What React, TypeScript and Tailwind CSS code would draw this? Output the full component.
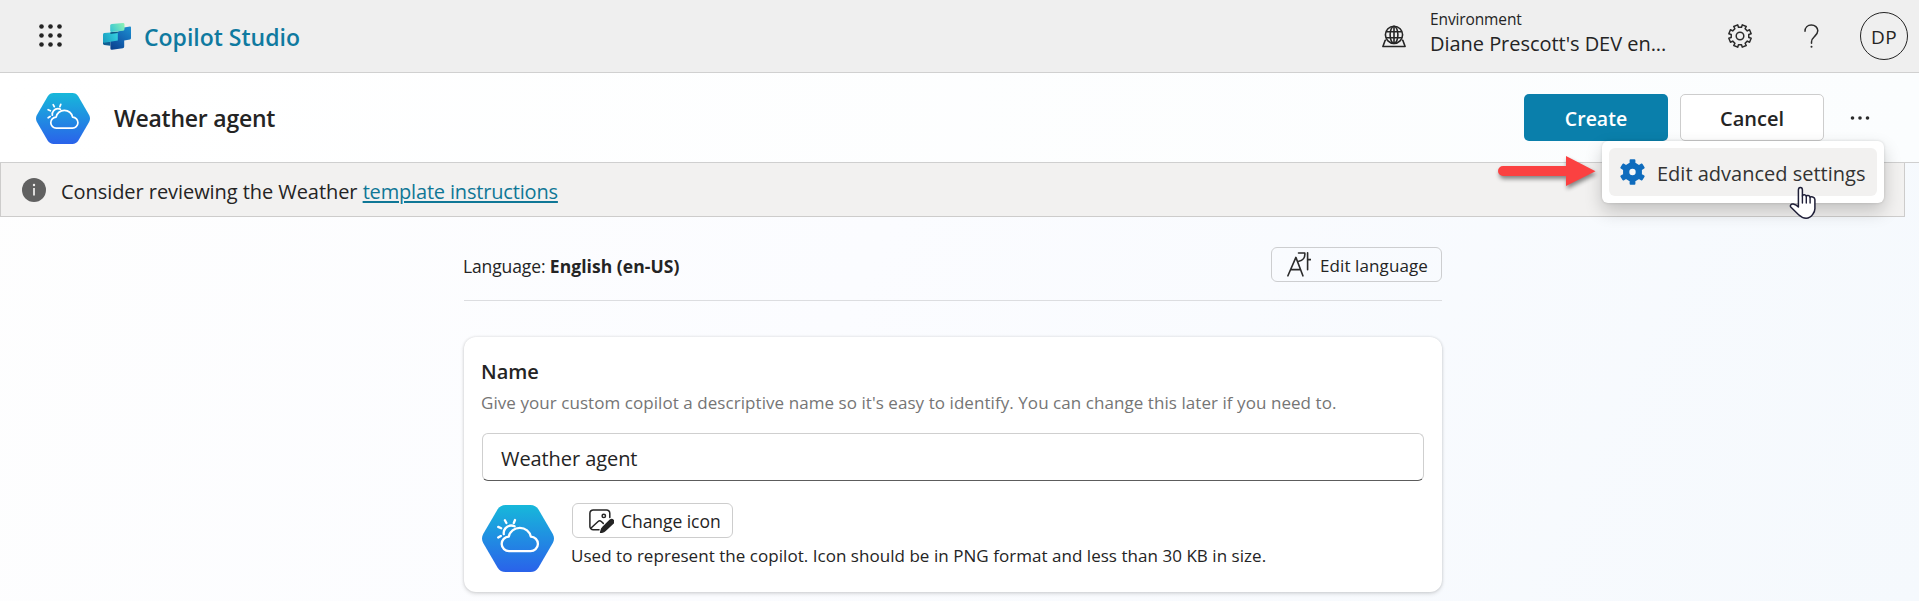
function HexWeather({ className, id }: { className: string; id: string }) {
  return (
    <svg className={className} viewBox="0 0 72 67" fill="none" preserveAspectRatio="none">
      <defs>
        <linearGradient id={id} x1="36" y1="0" x2="36" y2="67" gradientUnits="userSpaceOnUse">
          <stop stopColor="#17b8da" />
          <stop offset="1" stopColor="#2a62ea" />
        </linearGradient>
      </defs>
      <path
        d="M23.5 0h25c3.400 0 6.200 1.500 8 4.500l14.300 24.400c1.600 2.900 1.600 6.300 0 9.200L56.500 62.500c-1.800 3-4.600 4.500-8 4.500h-25c-3.400 0-6.200-1.500-8-4.500L1.200 38.100c-1.600-2.900-1.600-6.300 0-9.200L15.500 4.500C17.300 1.500 20.100 0 23.500 0z"
        fill={`url(#${id})`}
      />
      <g stroke="#fff" strokeWidth="2.300" strokeLinecap="round" strokeLinejoin="round">
        <path d="M27.200 46.200a7.300 7.300 0 0 1-.4-14.600c.9-5.100 5.500-8.800 11-8.800s10.100 3.700 11 8.800a7.300 7.300 0 0 1-.4 14.600z" />
        <path d="M21.800 29.200c-.8-4.600 3-8.700 7.400-8.700 1.300 0 2.400.3 3.400.8" />
        <path d="M24.400 18l-1.500-2.700M31.800 18l1.200-3M19.200 23.300l-3-1.400M18.800 30.900l-2.600 1.600" />
      </g>
    </svg>
  );
}

function CopilotLogo() {
  return (
    <svg className="h-[27px] w-7" viewBox="0 0 28 27">
      <defs>
        <linearGradient id="lgTop" x1="7" y1="8" x2="21" y2="0" gradientUnits="userSpaceOnUse">
          <stop stopColor="#35c3d4" />
          <stop offset="1" stopColor="#8df3b4" />
        </linearGradient>
        <linearGradient id="lgLeft" x1="0" y1="17" x2="14" y2="10" gradientUnits="userSpaceOnUse">
          <stop stopColor="#1a9fc0" />
          <stop offset="1" stopColor="#35cfe0" />
        </linearGradient>
        <linearGradient id="lgRight" x1="26" y1="4" x2="10" y2="26" gradientUnits="userSpaceOnUse">
          <stop stopColor="#1b8ccd" />
          <stop offset="0.5" stopColor="#1467b5" />
          <stop offset="1" stopColor="#0b438f" />
        </linearGradient>
      </defs>
      <path d="M21 4.500 27 3.600q1-.1 1 .9V15q0 1.200-1 1.400l-5.800 1v6.200q0 1.500-1.400 1.700L9 26.700q-1.600.2-1.600-1.300V17l7-8z" fill="url(#lgRight)" />
      <path d="M0 18.500l7.400 0v4.200L1.200 22Q0 21.800 0 20.600z" fill="#0f5f94" />
      <path d="M7.600 9.500 14.800 9v8.500L1.300 19.800Q0 20 0 18.800v-7.300Q0 10.300 1.200 10.100z" fill="url(#lgLeft)" />
      <path d="M7.400 9.300 14.800 8.500v1.400l-7.400 1z" fill="#0d5a86" />
      <path d="M8.800.9 20 0q1.500 0 1.500 1.400V6q0 1.500-1.400 1.700L8.700 9q-1.500.1-1.500-1.300V2.300Q7.200 1 8.800.9z" fill="url(#lgTop)" />
    </svg>
  );
}

function gearPath(cx: number, cy: number, teeth: number, ro: number, ri: number, wo: number, wi: number) {
  const step = (Math.PI * 2) / teeth;
  const pt = (a: number, r: number) =>
    `${(cx + r * Math.sin(a)).toFixed(2)} ${(cy - r * Math.cos(a)).toFixed(2)}`;
  let d = "";
  for (let i = 0; i < teeth; i++) {
    const a = i * step;
    d += `${i ? "L" : "M"}${pt(a - step * wi, ri)}L${pt(a - step * wo, ro)}L${pt(a + step * wo, ro)}L${pt(a + step * wi, ri)}`;
  }
  return d + "Z";
}

function SettingsOutline() {
  return (
    <svg className="size-6" viewBox="0 0 24 24" fill="none" stroke="#2b2b2b" strokeWidth="1.500" strokeLinejoin="round">
      <g transform="rotate(22.500 12 12)">
        <path d={gearPath(12, 12, 8, 11.4, 8.9, 0.24, 0.28)} />
      </g>
      <circle cx="12" cy="12" r="3.800" />
    </svg>
  );
}

function GlobeStand() {
  return (
    <svg className="h-[23px] w-6" viewBox="0 0 24 23" fill="none" stroke="#262626" strokeWidth="1.600">
      <circle cx="12" cy="9.800" r="8.600" />
      <ellipse cx="12" cy="9.800" rx="3.900" ry="8.600" />
      <path d="M4 6.800h16M4 12.800h16M12 1.200v17" />
      <path d="M4.200 15.200H3.200L.9 21.500h22.200l-2.300-6.300h-1" strokeLinejoin="round" />
    </svg>
  );
}

function HelpMark() {
  return (
    <svg className="h-6 w-[15px]" viewBox="0 0 15 24" fill="none">
      <path
        d="M1 7.200C1 3.500 3.700.9 7.300.9s6.500 2.500 6.500 5.900c0 2.700-1.700 4.200-3.300 5.700-1.700 1.600-3 2.900-3 5.400v1.300"
        stroke="#2b2b2b"
        strokeWidth="1.500"
        strokeLinecap="round"
      />
      <circle cx="7.500" cy="22.800" r="1" fill="#2b2b2b" />
    </svg>
  );
}

function LanguageIcon() {
  return (
    <svg className="h-[25px] w-6" viewBox="0 0 24 25" fill="none" stroke="#2b2b2b" strokeWidth="1.600" strokeLinecap="round" strokeLinejoin="round">
      <path d="M.9 23.800 8.900 5.400l7 18.400M3.900 17.600h9.600" />
      <path d="M11.500 1h6.300c.4 4-1.700 7.300-6 8.300M20.600.8v17M20.600 7.600h3" />
    </svg>
  );
}

function ImageEdit() {
  return (
    <svg className="h-6 w-[25px]" viewBox="0 0 25 24" fill="none" stroke="#242424" strokeWidth="1.500" strokeLinecap="round">
      <path d="M10 20.800H4.200A3.300 3.300 0 0 1 .9 17.500V4.200A3.300 3.300 0 0 1 4.200.9h13.300a3.300 3.300 0 0 1 3.300 3.300v4.300" />
      <path d="M1.800 19.300l7.300-6.800c1-.9 2.200-.9 3.200 0l2 1.900" />
      <circle cx="14.800" cy="6.900" r="1.700" />
      <path d="M21.200 11a2.200 2.200 0 0 1 3.100 3.100l-8 7.400c-1.300 1.200-2.600 1.700-4.700 2.100.3-2.100.6-3.700 2-5z" fill="#242424" strokeWidth="1.400" strokeLinejoin="round" />
    </svg>
  );
}

const dots = [2.5, 11.5, 20.5];

export default function App() {
  return (
    <div className="relative h-[601px] w-full overflow-hidden bg-[linear-gradient(115deg,#fefefe_0%,#fbfcff_45%,#f5f9fd_100%)] font-['Open_Sans',sans-serif] text-[#242424]">
      <header className="flex h-[73px] items-center border-b border-[#d0d0d0] bg-[#efefef] pl-[38.500px] pr-[11px]">
        <svg className="-mt-px size-[23px]" viewBox="0 0 23 23" fill="#242424">
          {dots.map((y) => dots.map((x) => <circle key={`${x}-${y}`} cx={x} cy={y} r="2.300" />))}
        </svg>
        <div className="ml-[41.500px]">
          <CopilotLogo />
        </div>
        <span className="ml-[13px] pt-0.5 text-[23px] leading-8 font-semibold text-[#0f7aa0]">Copilot Studio</span>
        <div className="ml-auto flex items-center">
          <GlobeStand />
          <div className="-mt-2.5 ml-6 w-[298px]">
            <div className="text-[15.500px] leading-6 tracking-[-0.120px]">Environment</div>
            <div className="pt-px text-[20px] leading-6 tracking-[-0.040px]">Diane Prescott's DEV en...</div>
          </div>
          <SettingsOutline />
          <div className="ml-[52px]">
            <HelpMark />
          </div>
          <div className="ml-[41px] flex size-12 items-center justify-center rounded-full border border-[#242424] pt-px text-[19px] leading-6 tracking-[0.300px]">
            DP
          </div>
        </div>
      </header>

      <div className="flex h-[90px] items-center border-b border-[#cfcfcf] bg-[linear-gradient(90deg,#ffffff,#fbfdfe)] pr-[46px] pl-9">
        <HexWeather className="mt-px h-[51px] w-[54px]" id="hexSmall" />
        <h1 className="ml-6 pt-px text-[23px] leading-8 font-semibold tracking-[-0.240px]">Weather agent</h1>
        <button className="ml-auto flex h-[47px] w-36 items-center justify-center rounded-[5px] bg-[#0a7fab] pt-[3px] text-[19.500px] leading-6 font-semibold text-white">
          Create
        </button>
        <button className="ml-3 flex h-[47px] w-36 items-center justify-center rounded-[5px] border border-[#cdcdcd] bg-white pt-[3px] text-[20px] leading-6 font-semibold">
          Cancel
        </button>
        <svg className="ml-[25px] h-5 w-6" viewBox="0 0 24 20" fill="#2b2b2b">
          <circle cx="3.500" cy="10" r="1.800" />
          <circle cx="11" cy="10" r="1.800" />
          <circle cx="18.500" cy="10" r="1.800" />
        </svg>
      </div>

      <div className="mr-3.5 flex h-[54px] items-center border-r border-b border-l border-[#cdcccb] bg-[#f2f1f0] pl-[21px]">
        <svg className="size-6" viewBox="0 0 24 24">
          <circle cx="12" cy="12" r="12" fill="#616161" />
          <circle cx="12" cy="7" r="1.200" fill="#f2f1f0" />
          <path d="M12 10v7.500" stroke="#f2f1f0" strokeWidth="1.700" />
        </svg>
        <p className="mt-1 ml-[15px] text-[20px] leading-7 tracking-[-0.060px]">
          Consider reviewing the Weather{" "}
          <a className="tracking-[-0.170px] text-[#0f7796] underline decoration-[1.500px] underline-offset-2">template instructions</a>
        </p>
      </div>

      <main className="ml-[464px] w-[978px]">
        <div className="flex h-[84px] items-start justify-between border-b border-[#dcdde0]">
          <p className="-ml-px mt-[37px] text-[17.500px] leading-6 tracking-[-0.120px]">
            Language: <span className="font-bold tracking-[0.050px]">English (en-US)</span>
          </p>
          <button className="mt-[30px] flex h-[35px] w-[171px] items-center rounded-[6px] border border-[#cdced0] pl-[15px]">
            <LanguageIcon />
            <span className="ml-[9px] pt-0.5 text-[17px] leading-6 tracking-[0.100px]">Edit language</span>
          </button>
        </div>

        <section className="mt-9 h-[255px] rounded-[12px] bg-white pt-5 pr-[18px] pl-[18px] shadow-[0_0_3px_rgba(0,0,0,0.14),0_2px_4px_rgba(0,0,0,0.12)]">
          <h2 className="-ml-px pt-px text-[20px] leading-7 font-semibold">Name</h2>
          <p className="-ml-px mt-[5px] text-[17px] leading-6 tracking-[0.060px] text-[#757575]">
            Give your custom copilot a descriptive name so it's easy to identify. You can change this later if you need to.
          </p>
          <div className="mt-[18px] flex h-12 items-center rounded-[6px] border border-[#cfcfcf] border-b-[#5c5c5c] pt-[3px] pl-[18px] text-[20px] leading-7 tracking-[-0.080px]">
            Weather agent
          </div>
          <div className="mt-[22px] flex">
            <HexWeather className="mt-0.5 h-[67px] w-[72px]" id="hexLarge" />
            <div className="ml-[18px]">
              <button className="flex h-[35px] w-[161px] items-center rounded-[6px] border border-[#cdcdcd] bg-white pl-4">
                <ImageEdit />
                <span className="ml-[7px] pt-px text-[17.500px] leading-6 tracking-[-0.050px]">Change icon</span>
              </button>
              <p className="-ml-px mt-[6px] text-[17px] leading-6 tracking-[0.040px]">
                Used to represent the copilot. Icon should be in PNG format and less than 30 KB in size.
              </p>
            </div>
          </div>
        </section>
      </main>

      <div className="absolute top-[141px] left-[1602px] h-[62px] w-[282px] rounded-[6px] bg-white p-[7px] shadow-[0_0_3px_rgba(0,0,0,0.14),0_8px_18px_rgba(0,0,0,0.20)]">
        <div className="flex h-12 items-center rounded-[6px] bg-[#f2f1f0] pl-[11px]">
          <svg className="h-[26px] w-[25px]" viewBox="0 0 25 26">
            <path
              d={gearPath(12.5, 13, 6, 12, 8.9, 0.16, 0.22)}
              fill="#0f6cbd"
              stroke="#0f6cbd"
              strokeWidth="1.800"
              strokeLinejoin="round"
            />
            <circle cx="12.500" cy="13" r="3.200" fill="#f7f8f9" />
          </svg>
          <span className="ml-3 pt-[3px] text-[20px] leading-7 whitespace-nowrap text-[#333]">Edit advanced settings</span>
        </div>
      </div>

      <svg className="absolute top-[148px] left-[1490px] h-12 w-[112px] drop-shadow-[1px_3px_2px_rgba(0,0,0,0.450)]" viewBox="0 0 112 48">
        <path d="M13 18h63V8l29.500 15.200L76 38V28H13a5 5 0 0 1 0-10z" fill="#fb4141" />
      </svg>

      <svg className="absolute top-[186px] left-[1789px] h-[34px] w-[27px]" viewBox="0 0 27 34">
        <path
          d="M9.400 21V4c0-1.500.8-2.600 2-2.600s2 1.100 2 2.600v6c.3-1.800 3.600-1.700 3.800.3.600-1.300 3.500-1.100 3.800.9.800-1 4.900-.5 4.900 2.400v9.200c0 2.500-.8 3.600-2 5.300-1.700 2.500-3.300 4.100-6.800 4.100-3.300 0-5.300-1.300-7.500-3.400L2 21.300c-1.500-1.700.2-3.800 2.300-3.300 2 .5 3.900 1.700 5.100 3z"
          fill="#fff"
          stroke="#1f1f38"
          strokeWidth="1.500"
          strokeLinejoin="round"
        />
        <path d="M13.400 10v7M17.300 10.500V17M21.100 11.500V17" stroke="#1f1f38" strokeWidth="1.400" strokeLinecap="round" />
      </svg>
    </div>
  );
}
